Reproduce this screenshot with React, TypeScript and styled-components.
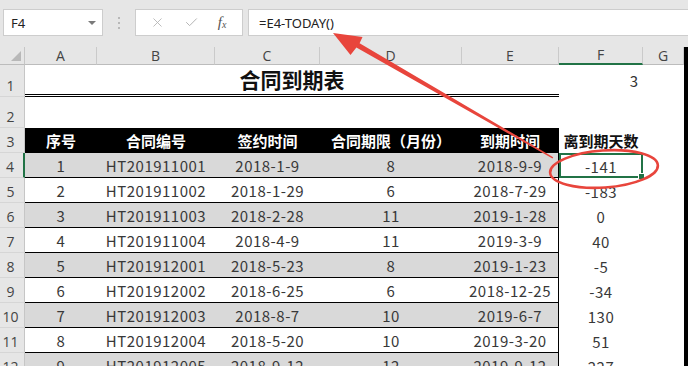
import React from 'react'
import styled, { createGlobalStyle } from 'styled-components'
import { X, Check } from 'lucide-react'

const GlobalStyle = createGlobalStyle`
  html, body {
    margin: 0;
    padding: 0;
    background: #fff;
  }
  body {
    width: 688px;
    height: 366px;
    overflow: hidden;
    font-family: 'Noto Sans CJK SC', 'Noto Sans', sans-serif;
  }
`

const COLS = '25px 72px 118px 105px 142px 97px 84px 1fr'
const GREEN = '#217346'
const RED = '#e8453c'

const rows: [number, string, string, number, string, number][] = [
  [1, 'HT201911001', '2018-1-9', 8, '2018-9-9', -141],
  [2, 'HT201911002', '2018-1-29', 6, '2018-7-29', -183],
  [3, 'HT201911003', '2018-2-28', 11, '2019-1-28', 0],
  [4, 'HT201911004', '2018-4-9', 11, '2019-3-9', 40],
  [5, 'HT201912001', '2018-5-23', 8, '2019-1-23', -5],
  [6, 'HT201912002', '2018-6-25', 6, '2018-12-25', -34],
  [7, 'HT201912003', '2018-8-7', 10, '2019-6-7', 130],
  [8, 'HT201912004', '2018-5-20', 10, '2019-3-20', 51],
  [9, 'HT201912005', '2018-9-12', 12, '2019-9-12', 227],
]

const headers = ['序号', '合同编号', '签约时间', '合同期限（月份）', '到期时间']

const App: React.FC = () => {
  return (
    <Window>
      <GlobalStyle />
      <FormulaBar>
        <NameBox>
          F4
          <Caret />
        </NameBox>
        <Dots>
          <i />
          <i />
          <i />
        </Dots>
        <FnBox>
          <X size={15} strokeWidth={1.4} color="#b4b4b4" />
          <Check size={15} strokeWidth={1.6} color="#b4b4b4" />
          <Fx>
            f<sub>x</sub>
          </Fx>
        </FnBox>
        <FormulaInput>=E4-TODAY()</FormulaInput>
      </FormulaBar>

      <Sheet>
        <Grid>
          <Corner>
            <svg width="10" height="10" viewBox="0 0 10 10">
              <polygon points="10,0 10,10 0,10" fill="#b8b8b8" />
            </svg>
          </Corner>
          {['A', 'B', 'C', 'D', 'E', 'F', 'G'].map((c) => (
            <ColHead key={c} $active={c === 'F'}>
              {c}
            </ColHead>
          ))}

          <RowHead>1</RowHead>
          <TitleCell>合同到期表</TitleCell>
          <NumCell>3</NumCell>
          <Blank />

          <RowHead>2</RowHead>
          <Blank style={{ gridColumn: 'span 7' }} />

          <RowHead $mid>3</RowHead>
          {headers.map((h, i) => (
            <HeadCell key={h} $edge={i === 4}>
              {h}
            </HeadCell>
          ))}
          <DaysHead>离到期天数</DaysHead>
          <Blank />

          {rows.map((r, i) => (
            <React.Fragment key={r[0]}>
              <RowHead $mid $active={i === 0}>
                {i + 4}
              </RowHead>
              <DataCell $shade={i % 2 === 0}>{r[0]}</DataCell>
              <DataCell $shade={i % 2 === 0}>{r[1]}</DataCell>
              <DataCell $shade={i % 2 === 0}>{r[2]}</DataCell>
              <DataCell $shade={i % 2 === 0}>{r[3]}</DataCell>
              <DataCell $shade={i % 2 === 0} $edge>
                {r[4]}
              </DataCell>
              <DaysCell $selected={i === 0}>{r[5]}</DaysCell>
              <Blank />
            </React.Fragment>
          ))}
        </Grid>
        <EdgeStrip />
      </Sheet>

      <Annotation width="688" height="366" viewBox="0 0 688 366">
        <polygon
          points="333,33 350.5,55 356.4,47.5 552.5,158.5 553.2,157.2 359.6,43.2 362.5,37"
          fill={RED}
        />
        <ellipse
          cx="604"
          cy="169"
          rx="54"
          ry="18.5"
          fill="none"
          stroke={RED}
          strokeWidth="2.6"
          transform="rotate(-4 604 169)"
        />
      </Annotation>
    </Window>
  )
}

export default App

const Window = styled.div`
  position: relative;
  width: 688px;
  height: 366px;
  overflow: hidden;
  background: #fff;
`

const FormulaBar = styled.div`
  display: flex;
  align-items: flex-start;
  box-sizing: border-box;
  height: 47px;
  padding: 9px 0 0 3px;
  background: #e6e6e6;
  font-family: 'Noto Sans', 'Liberation Sans', sans-serif;
  font-size: 13px;
  color: #222;
`

const NameBox = styled.div`
  box-sizing: border-box;
  width: 100px;
  height: 27px;
  display: flex;
  align-items: center;
  justify-content: space-between;
  padding: 0 6px 0 7px;
  background: #fff;
  border: 1px solid #cdcdcd;
`

const Caret = styled.span`
  width: 0;
  height: 0;
  border-left: 4px solid transparent;
  border-right: 4px solid transparent;
  border-top: 4px solid #7a7a7a;
`

const Dots = styled.div`
  width: 32px;
  height: 27px;
  display: flex;
  flex-direction: column;
  align-items: center;
  justify-content: center;
  gap: 3px;

  > i {
    width: 2px;
    height: 2px;
    background: #b8b8b8;
  }
`

const FnBox = styled.div`
  box-sizing: border-box;
  width: 108px;
  height: 27px;
  display: flex;
  align-items: center;
  justify-content: space-around;
  padding: 0 6px 0 4px;
  background: #fff;
  border: 1px solid #cdcdcd;
`

const Fx = styled.span`
  font-family: 'Liberation Serif', serif;
  font-style: italic;
  font-size: 15px;
  color: #555;

  > sub {
    font-size: 10px;
    vertical-align: -1px;
  }
`

const FormulaInput = styled.div`
  box-sizing: border-box;
  flex: 1;
  height: 27px;
  margin-left: 5px;
  display: flex;
  align-items: center;
  padding-left: 10px;
  background: #fff;
  border: 1px solid #cdcdcd;
  border-right: none;
`

const Sheet = styled.div`
  display: flex;
  height: 319px;
`

const Grid = styled.div`
  flex: 1;
  display: grid;
  grid-template-columns: ${COLS};
  grid-template-rows: 18px 32px 31px repeat(10, 25px);
  font-size: 15px;
  color: #383838;
`

const EdgeStrip = styled.div`
  width: 4px;
  background: #000;
`

const headerCell = `
  box-sizing: border-box;
  display: flex;
  justify-content: center;
  background: #e6e6e6;
  font-family: 'Open Sans', 'Noto Sans', sans-serif;
  font-size: 14px;
  color: #444;
`

const Corner = styled.div`
  ${headerCell}
  align-items: flex-end;
  justify-content: flex-end;
  padding: 0 3px 3px 0;
  border-right: 1px solid #c6c6c6;
  border-bottom: 1px solid #bcbcbc;
`

const ColHead = styled.div<{ $active?: boolean }>`
  ${headerCell}
  align-items: center;
  line-height: 1;
  border-right: 1px solid #cacaca;
  border-bottom: ${(p) => (p.$active ? `2px solid ${GREEN}` : '1px solid #bcbcbc')};
`

const RowHead = styled.div<{ $active?: boolean; $mid?: boolean }>`
  ${headerCell}
  align-items: ${(p) => (p.$mid ? 'center' : 'flex-end')};
  padding: ${(p) => (p.$mid ? '3px 3px 0 0' : '0 3px 1px 0')};
  border-bottom: 1px solid #d6d6d6;
  border-right: ${(p) => (p.$active ? `2px solid ${GREEN}` : '1px solid #c6c6c6')};
`

const Blank = styled.div`
  background: #fff;
`

const TitleCell = styled.div`
  grid-column: span 5;
  display: flex;
  align-items: center;
  justify-content: center;
  padding-bottom: 2px;
  border-bottom: 3px double #000;
  font-size: 21px;
  font-weight: 700;
  color: #111;
`

const NumCell = styled.div`
  display: flex;
  align-items: center;
  justify-content: flex-end;
  padding: 0 5px 2px 0;
  font-size: 15px;
  color: #333;
`

const HeadCell = styled.div<{ $edge?: boolean }>`
  display: flex;
  align-items: center;
  justify-content: center;
  background: #000;
  color: #fff;
  font-weight: 700;
  font-size: 15px;
  border-right: ${(p) => (p.$edge ? '1px solid #000' : 'none')};
`

const DaysHead = styled.div`
  display: flex;
  align-items: center;
  justify-content: center;
  font-weight: 700;
  font-size: 15px;
  color: #111;
`

const DataCell = styled.div<{ $shade?: boolean; $edge?: boolean }>`
  box-sizing: border-box;
  display: flex;
  align-items: center;
  justify-content: center;
  padding-top: 1px;
  background: ${(p) => (p.$shade ? '#d9d9d9' : '#fff')};
  border-bottom: 1px solid #000;
  border-right: ${(p) => (p.$edge ? '1px solid #000' : 'none')};
  letter-spacing: 0.5px;
`

const DaysCell = styled.div<{ $selected?: boolean }>`
  position: relative;
  box-sizing: border-box;
  display: flex;
  align-items: center;
  justify-content: center;
  padding-top: 1px;
  letter-spacing: 0.5px;
  border: ${(p) => (p.$selected ? `2px solid ${GREEN}` : 'none')};

  &::after {
    content: '';
    display: ${(p) => (p.$selected ? 'block' : 'none')};
    position: absolute;
    right: -4px;
    bottom: -4px;
    width: 5px;
    height: 5px;
    background: ${GREEN};
    border: 1px solid #fff;
  }
`

const Annotation = styled.svg`
  position: absolute;
  top: 0;
  left: 0;
  pointer-events: none;
`
